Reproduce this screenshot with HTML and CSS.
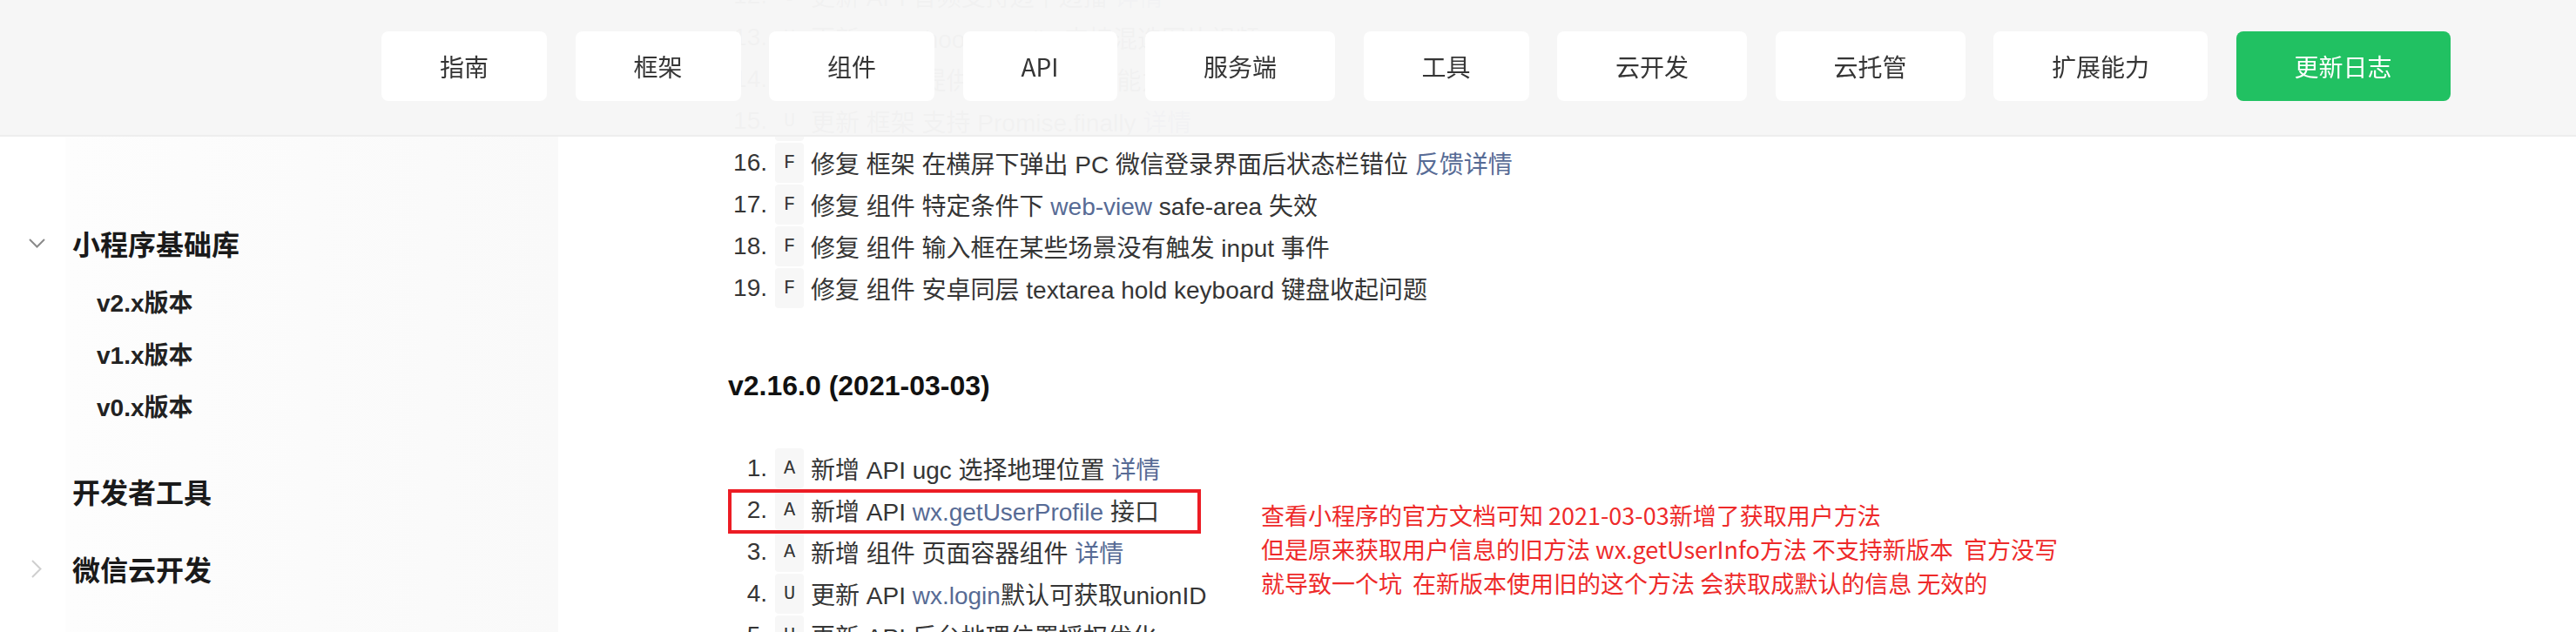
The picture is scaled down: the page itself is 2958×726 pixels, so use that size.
FILE: index.html
```html
<!DOCTYPE html>
<html lang="zh-CN">
<head>
    <meta charset="UTF-8">
    <meta name="viewport" content="width=device-width, initial-scale=1.0">
    <title>基础库更新日志</title>
    <link rel="stylesheet" href="styles.css">
</head>
<body>
    <header class="topbar">
        <nav class="topnav">
            <a class="nav-btn">指南</a>
            <a class="nav-btn">框架</a>
            <a class="nav-btn">组件</a>
            <a class="nav-btn">API</a>
            <a class="nav-btn">服务端</a>
            <a class="nav-btn">工具</a>
            <a class="nav-btn">云开发</a>
            <a class="nav-btn">云托管</a>
            <a class="nav-btn">扩展能力</a>
            <a class="nav-btn active">更新日志</a>
        </nav>
    </header>

    <div class="page">
        <aside class="sidebar">
            <div class="nav-group">
                <div class="nav-title">
                    <span class="arrow">
                        <svg width="19" height="11" viewBox="0 0 19 11"><polyline points="1,1 9.5,9.5 18,1" fill="none" stroke="#8a8a8a" stroke-width="2"/></svg>
                    </span>
                    小程序基础库
                </div>
                <ul class="nav-items">
                    <li>v2.x版本</li>
                    <li>v1.x版本</li>
                    <li>v0.x版本</li>
                </ul>
            </div>
            <div class="nav-group">
                <div class="nav-title"><span class="arrow"></span>开发者工具</div>
            </div>
            <div class="nav-group">
                <div class="nav-title">
                    <span class="arrow">
                        <svg width="12" height="21" viewBox="0 0 12 21"><polyline points="1,1 10.5,10.5 1,20" fill="none" stroke="#cfcfcf" stroke-width="2"/></svg>
                    </span>
                    微信云开发
                </div>
            </div>
        </aside>

        <main class="content">
            <section class="release">
                <ol class="changes first">
                    <li><span class="num">12.</span><span class="tag">U</span><span class="text">更新 API 音频支持边下边播 <a>详情</a></span></li>
                    <li><span class="num">13.</span><span class="tag">U</span><span class="text">更新 API chooseMedia 支持混选图片视频</span></li>
                    <li><span class="num">14.</span><span class="tag">U</span><span class="text">更新 框架 提供公众号强提醒能力</span></li>
                    <li><span class="num">15.</span><span class="tag">U</span><span class="text">更新 框架 支持 Promise.finally <a>详情</a></span></li>
                    <li><span class="num">16.</span><span class="tag">F</span><span class="text">修复 框架 在横屏下弹出 PC 微信登录界面后状态栏错位 <a>反馈详情</a></span></li>
                    <li><span class="num">17.</span><span class="tag">F</span><span class="text">修复 组件 特定条件下 <a>web-view</a> safe-area 失效</span></li>
                    <li><span class="num">18.</span><span class="tag">F</span><span class="text">修复 组件 输入框在某些场景没有触发 input 事件</span></li>
                    <li><span class="num">19.</span><span class="tag">F</span><span class="text">修复 组件 安卓同层 textarea hold keyboard 键盘收起问题</span></li>
                </ol>
            </section>

            <section class="release">
                <h3 class="release-title">v2.16.0 (2021-03-03)</h3>
                <ol class="changes">
                    <li><span class="num">1.</span><span class="tag">A</span><span class="text">新增 API ugc 选择地理位置 <a>详情</a></span></li>
                    <li class="marked"><span class="num">2.</span><span class="tag">A</span><span class="text">新增 API <a>wx.getUserProfile</a> 接口</span></li>
                    <li><span class="num">3.</span><span class="tag">A</span><span class="text">新增 组件 页面容器组件 <a>详情</a></span></li>
                    <li><span class="num">4.</span><span class="tag">U</span><span class="text">更新 API <a>wx.login</a>默认可获取unionID</span></li>
                    <li><span class="num">5.</span><span class="tag">U</span><span class="text">更新 API 后台地理位置授权优化</span></li>
                </ol>
                <p class="note">查看小程序的官方文档可知 2021-03-03新增了获取用户方法
但是原来获取用户信息的旧方法 wx.getUserInfo方法 不支持新版本  官方没写
就导致一个坑  在新版本使用旧的这个方法 会获取成默认的信息 无效的</p>
            </section>
        </main>
    </div>
</body>
</html>
```

FILE: styles.css
```css
body {
    margin: 0;
    font-family: "Liberation Sans", "Noto Sans CJK SC", sans-serif;
    color: #353535;
    background: #fff;
    overflow: hidden;
}
a {
    color: #576b95;
    text-decoration: none;
}

/* top navigation, floats over the page */
.topbar {
    position: fixed;
    top: 0;
    left: 0;
    right: 0;
    height: 155px;
    background: rgba(246, 246, 246, 0.975);
    border-bottom: 2px solid #eeeeee;
    z-index: 10;
}
.topnav {
    display: flex;
    gap: 32.5px;
    padding: 36px 0 0 438px;
}
.nav-btn {
    height: 80px;
    padding: 0 67px;
    display: flex;
    align-items: center;
    background: #fff;
    border-radius: 8px;
    font-family: "Noto Sans CJK SC", sans-serif;
    font-size: 28px;
    color: #353535;
}
.nav-btn.active {
    background: #21c162;
    color: #fff;
}

.page {
    display: flex;
    min-height: 100vh;
}

/* left menu */
.sidebar {
    width: 641px;
    flex: none;
    padding-top: 255px;
    box-sizing: border-box;
    background: linear-gradient(90deg, #fff 0 75px, #fdfdfd 75px, #f9f9f9 641px);
    color: #1a1a1a;
}
.nav-title {
    display: flex;
    align-items: center;
    height: 48px;
    padding-left: 32px;
    font-size: 32px;
    font-weight: bold;
}
.arrow {
    width: 20px;
    display: flex;
    justify-content: center;
    margin-right: 31px;
}
.nav-items {
    list-style: none;
    margin: 16px 0 0;
    padding: 0;
}
.nav-items li {
    height: 60px;
    line-height: 60px;
    padding-left: 111px;
    font-size: 28px;
    font-weight: bold;
    color: #222;
}
.nav-group + .nav-group {
    margin-top: 41px;
}

/* changelog */
.content {
    flex: 1;
    padding-left: 195px;
}
.release {
    position: relative;
}
.release-title {
    margin: 64px 0 0;
    line-height: 48px;
    font-size: 32px;
    font-weight: bold;
    color: #111;
}
.changes {
    list-style: none;
    margin: 47px 0 0;
    padding: 0;
    font-size: 28px;
}
.changes.first {
    margin-top: -29px;
}
.changes li {
    display: flex;
    align-items: center;
    height: 48px;
    white-space: nowrap;
}
.num {
    width: 45px;
    margin-right: 9px;
    text-align: right;
}
.tag {
    width: 33px;
    height: 46px;
    margin-right: 8px;
    display: flex;
    align-items: center;
    justify-content: center;
    background: #f7f7f7;
    border-radius: 4px;
    font-family: "Liberation Mono", monospace;
    font-size: 22px;
}
.changes li.marked {
    position: relative;
}
.changes li.marked::after {
    content: "";
    position: absolute;
    left: 0;
    top: 0;
    width: 543px;
    height: 51px;
    border: 4px solid #ec1c24;
    box-sizing: border-box;
}
.note {
    position: absolute;
    left: 612px;
    top: 153px;
    margin: 0;
    white-space: pre;
    font-family: "Noto Sans CJK SC", sans-serif;
    font-size: 27px;
    line-height: 39px;
    color: #ee2a2a;
}
```
